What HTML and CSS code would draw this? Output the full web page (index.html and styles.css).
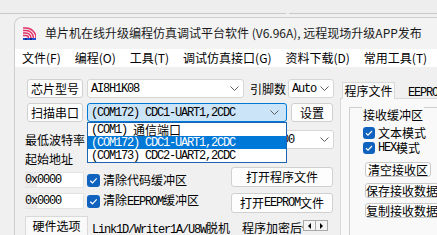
FILE: index.html
```html
<!DOCTYPE html>
<html lang="zh-CN">
<head>
<meta charset="utf-8">
<title>单片机在线升级编程仿真调试平台软件</title>
<link rel="stylesheet" href="styles.css">
</head>
<body>
<div class="desk"><div class="seg seg-a"></div><div class="seg seg-b"></div></div>
<div class="win">
  <div class="titlebar">
    <svg class="logo" width="13" height="13" viewBox="0 0 13 13">
      <path d="M0 8.5H3A2.5 2.5 0 0 1 5.5 11M0 6H3A5 5 0 0 1 8 11M0 3.5H3A7.5 7.5 0 0 1 10.5 11M0 1H3A10 10 0 0 1 13 11" fill="none" stroke="#e4336a" stroke-width="1.4"/>
      <rect x="0" y="11" width="13" height="2" fill="#2150d6"/>
      <path d="M2 11.3h2v1.4H2zM7 11.3h2v1.4H7z" fill="#0b1f7a"/>
    </svg>
    <span class="title">单片机在线升级编程仿真调试平台软件 (V6.96A), 远程现场升级APP发布</span>
  </div>
  <div class="menubar">
    <span>文件(F)</span><span>编程(O)</span><span>工具(T)</span><span>调试仿真接口(G)</span><span>资料下载(D)</span><span>常用工具(T)</span>
  </div>
  <div class="content">
    <div class="leftcol">
      <div class="row r1">
        <div class="btn b-label">芯片型号</div>
        <div class="combo c-chip"><span class="mono">AI8H1K08</span><svg class="chev" width="9" height="5" viewBox="0 0 9 5"><path d="M.5.5 4.5 4.5 8.5.5" fill="none" stroke="#5d5d5d"/></svg></div>
        <span class="lbl l-pins">引脚数</span>
        <div class="combo c-pins"><span class="mono">Auto</span><svg class="chev" width="9" height="5" viewBox="0 0 9 5"><path d="M.5.5 4.5 4.5 8.5.5" fill="none" stroke="#5d5d5d"/></svg></div>
      </div>
      <div class="row r2">
        <div class="btn b-label">扫描串口</div>
        <div class="combo c-port">
          <span class="mono">(COM172) CDC1-UART1,2CDC</span><svg class="chev" width="9" height="5" viewBox="0 0 9 5"><path d="M.5.5 4.5 4.5 8.5.5" fill="none" stroke="#5d5d5d"/></svg>
          <div class="popup">
            <div class="opt"><span class="mono">(COM1) </span><span class="cjk">通信端口</span></div>
            <div class="opt hl"><span class="mono">(COM172) CDC1-UART1,2CDC</span></div>
            <div class="opt"><span class="mono">(COM173) CDC2-UART2,2CDC</span></div>
          </div>
        </div>
        <div class="btn b-set">设置</div>
      </div>
      <div class="row r3">
        <span class="lbl">最低波特率</span>
        <div class="combo c-min"><span class="mono">2400</span><svg class="chev" width="9" height="5" viewBox="0 0 9 5"><path d="M.5.5 4.5 4.5 8.5.5" fill="none" stroke="#5d5d5d"/></svg></div>
        <span class="lbl l-max">最高波特率</span>
        <div class="combo c-max"><span class="mono">115200</span><svg class="chev" width="9" height="5" viewBox="0 0 9 5"><path d="M.5.5 4.5 4.5 8.5.5" fill="none" stroke="#5d5d5d"/></svg></div>
      </div>
      <div class="row r4"><span class="lbl">起始地址</span></div>
      <div class="row r5">
        <div class="addr">
          <div class="field"><span class="mono"><span class="pfx">0x</span>0000</span></div>
          <span class="cb"><svg width="13" height="13" viewBox="0 0 13 13"><path d="M3.3 6.7 5.5 8.8 9.7 4.3" fill="none" stroke="#fff" stroke-width="1.2"/></svg></span>
          <span class="ctext">清除代码缓冲区</span>
        </div>
        <div class="btn b-open">打开程序文件</div>
      </div>
      <div class="row r6">
        <div class="addr">
          <div class="field"><span class="mono"><span class="pfx">0x</span>0000</span></div>
          <span class="cb"><svg width="13" height="13" viewBox="0 0 13 13"><path d="M3.3 6.7 5.5 8.8 9.7 4.3" fill="none" stroke="#fff" stroke-width="1.2"/></svg></span>
          <span class="ctext">清除<span class="mono">EEPROM</span>缓冲区</span>
        </div>
        <div class="btn b-open">打开<span class="mono">EEPROM</span>文件</div>
      </div>
      <div class="btabs">
        <div class="tstrip">
          <div class="btab sel">硬件选项</div>
          <div class="btab un t2"><span class="mono">Link1D/Writer1A/U8W</span>脱机</div>
          <div class="btab un t3">程序加密后传输</div>
        </div>
        <div class="scroll">
          <div class="sbtn"><span class="tri-l"></span></div>
          <div class="sbtn"><span class="tri-r"></span></div>
        </div>
      </div>
    </div>
    <div class="rightcol">
      <div class="rtabs">
        <div class="rtab sel">程序文件</div>
        <div class="rtab un"><span class="mono">EEPROM</span>文件</div>
      </div>
      <div class="rpanel">
        <div class="group">
          <div class="gtitle">接收缓冲区</div>
          <div class="chk c-first"><span class="cb sm"><svg width="12" height="12" viewBox="0 0 12 12"><path d="M3 6.2 5 8.1 9 4" fill="none" stroke="#fff" stroke-width="1.2"/></svg></span>文本模式</div>
          <div class="chk"><span class="cb sm"><svg width="12" height="12" viewBox="0 0 12 12"><path d="M3 6.2 5 8.1 9 4" fill="none" stroke="#fff" stroke-width="1.2"/></svg></span><span class="mono">HEX</span>模式</div>
          <div class="rbtn rb1">清空接收区</div>
          <div class="rbtn rb2">保存接收数据</div>
          <div class="rbtn rb3">复制接收数据</div>
        </div>
      </div>
    </div>
  </div>
</div>
</body>
</html>
```
FILE: styles.css
```css
* { box-sizing: border-box; }
html, body { margin: 0; padding: 0; }
body {
  width: 437px;
  height: 235px;
  overflow: hidden;
  background: #f0f0f0;
  font-family: "Noto Sans CJK SC", "Noto Sans", sans-serif;
  font-size: 12px;
  line-height: 14px;
  color: #000;
}
.mono {
  font-family: "Liberation Mono", "Noto Sans CJK SC", monospace;
  font-size: 12px;
  letter-spacing: -1.2px;
  white-space: pre;
}
.cjk { font-family: "Noto Sans CJK SC", sans-serif; font-size: 12px; letter-spacing: 0; }

.desk { height: 14px; display: flex; align-items: flex-end; background: #eeeeee; }
.seg { height: 1px; background: #c9c9c9; }
.seg-a { width: 286px; }
.seg-b { flex: 1; margin-left: 3px; }

.win {
  margin: 3px 0 0 14px;
  height: 218px;
  border-top: 1px solid #cdcdcd;
  border-left: 1px solid #cdcdcd;
  border-top-left-radius: 8px;
  background: #f0f0f0;
  overflow: hidden;
}
.titlebar {
  height: 31px;
  display: flex;
  align-items: center;
  padding-left: 8px;
  padding-bottom: 1px;
  background: #f3f3f3;
}
.logo { flex: none; }
.title { margin-left: 9px; white-space: nowrap; color: #1a1a1a; }

.menubar {
  height: 18px;
  background: #fff;
  display: flex;
  align-items: center;
  padding-left: 7px;
  gap: 14px;
  white-space: nowrap;
}

.content { display: flex; padding: 12px 0 0 10px; }
.leftcol { width: 309px; flex: none; display: flex; flex-direction: column; }
.row { display: flex; align-items: center; }
.lbl { white-space: nowrap; }

.btn {
  height: 19px;
  border: 1px solid #d0d0d0;
  border-radius: 3px;
  background: #fdfdfd;
  display: flex;
  align-items: center;
  justify-content: center;
  white-space: nowrap;
}
.b-label { width: 56px; margin-left: 2px; }
.b-set { width: 42px; margin-left: 4px; }

.combo {
  height: 19px;
  border: 1px solid #d6d6d6;
  border-radius: 3px;
  background: #fff;
  display: flex;
  align-items: center;
  justify-content: space-between;
  padding: 0 4px 0 3px;
  white-space: nowrap;
}
.chev { flex: none; }
.r1 { height: 19px; }
.c-chip { width: 157px; margin-left: 4px; }
.l-pins { width: 36px; margin-left: 6px; }
.c-pins { width: 46px; margin-left: 2px; }

.r2 { height: 19px; margin-top: 5px; }
.c-port {
  width: 200px;
  margin-left: 4px;
  background: #cce4f7;
  border-color: #0078d4;
  padding-right: 7px;
  position: relative;
}
.popup {
  position: absolute;
  left: -1px;
  top: 18px;
  width: 200px;
  border: 1px solid #1a64b4;
  background: #fff;
  z-index: 5;
  display: flex;
  flex-direction: column;
}
.opt { display: flex; align-items: center; height: 13px; padding-left: 3px; white-space: nowrap; }
.opt .mono, .opt .cjk { line-height: 12px; }
.opt.hl { background: #0078d7; color: #fff; }

.r3 { height: 19px; margin-top: 8px; }
.c-min { width: 90px; margin-left: 4px; }
.l-max { margin-left: 4px; }
.c-max { width: 80px; margin-left: auto; }

.r4 { height: 14px; margin-top: 3px; }
.r5 { margin-top: 1px; align-items: flex-start; }
.r5 .addr { margin-top: 5px; }
.r6 { margin-top: 5px; align-items: flex-start; }
.addr { display: flex; align-items: center; height: 16px; }
.field {
  width: 59px;
  height: 16px;
  background: #fff;
  border: 1px solid #e4e4e4;
  border-left: none;
  display: flex;
  align-items: center;
}
.pfx { background: #ececec; }
.cb {
  flex: none;
  width: 13px;
  height: 13px;
  border-radius: 3px;
  background: #0f63bf;
  margin-left: 3px;
  display: flex;
}
.cb.sm { width: 12px; height: 12px; margin: 0 3px 0 0; }
.ctext { margin-left: 3px; white-space: nowrap; }
.b-open { width: 102px; height: 20px; margin-left: auto; margin-right: 1px; }

.btabs { display: flex; margin-top: 3px; height: 19px; }
.tstrip { display: flex; width: 278px; overflow: hidden; }
.btab { white-space: nowrap; flex: none; }
.btab.sel {
  width: 63px;
  border: 1px solid #d9d9d9;
  border-bottom: none;
  background: #f9f9f9;
  text-align: center;
  padding-top: 2px;
}
.btab.un { padding-top: 5px; }
.t2 { padding-left: 4px; padding-right: 6px; }
.t3 { padding-left: 6px; }
.scroll { display: flex; margin-top: 4px; height: 11px; }
.sbtn {
  width: 13px;
  height: 11px;
  border: 1px solid #a8a8a8;
  background: #f4f4f4;
  display: flex;
  align-items: center;
  justify-content: center;
}
.sbtn + .sbtn { margin-left: -1px; }
.tri-l, .tri-r { width: 0; height: 0; border-top: 3px solid transparent; border-bottom: 3px solid transparent; }
.tri-l { border-right: 3px solid #000; }
.tri-r { border-left: 3px solid #000; }

.rightcol { flex: 1; margin-left: 6px; margin-top: 3px; display: flex; flex-direction: column; min-width: 0; }
.rtabs { display: flex; height: 16px; }
.rtab { white-space: nowrap; flex: none; }
.rtab.sel {
  margin-left: 2px;
  width: 53px;
  height: 17px;
  margin-bottom: -1px;
  border: 1px solid #d9d9d9;
  border-bottom: none;
  background: #f9f9f9;
  text-align: center;
  padding-top: 1px;
  position: relative;
  z-index: 1;
}
.rtab.un { padding-left: 13px; padding-top: 2px; }
.rpanel {
  height: 140px;
  border-top: 1px solid #d9d9d9;
  border-left: 1px solid #d9d9d9;
  background: #f9f9f9;
}
.group {
  width: 120px;
  height: 130px;
  margin: 8px 0 0 8px;
  border: 1px solid #cfcfcf;
  padding-left: 13px;
  display: flex;
  flex-direction: column;
  align-items: flex-start;
}
.gtitle {
  margin: -2px 0 0 -1px;
  padding: 2px 1px 0;
  background: #f9f9f9;
  white-space: nowrap;
}
.chk { display: flex; align-items: center; height: 14px; margin-top: 1px; white-space: nowrap; }
.chk.c-first { margin-top: 4px; }
.rbtn {
  height: 15px;
  line-height: 13px;
  border: 1px solid #c9c9c9;
  border-radius: 3px;
  background: #fdfdfd;
  margin-left: 2px;
  text-align: center;
  white-space: nowrap;
  overflow: hidden;
  flex: none;
}
.rb1 { width: 66px; margin-top: 7px; }
.rb2 { width: 74px; margin-top: 6px; }
.rb3 { width: 74px; margin-top: 5px; }
```
